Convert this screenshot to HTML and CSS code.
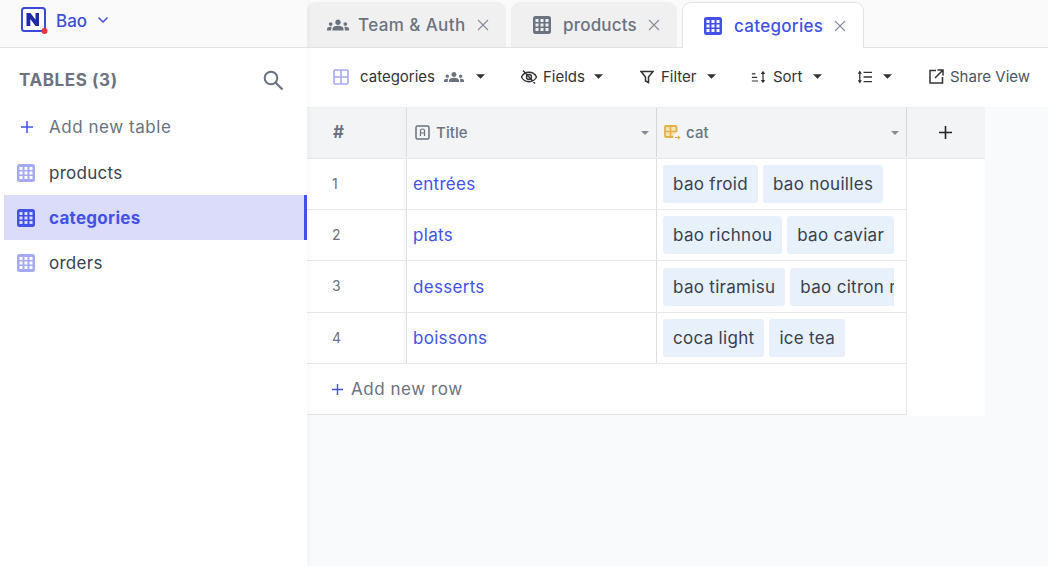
FILE: index.html
```html
<!DOCTYPE html>
<html lang="fr">
<head>
  <meta charset="UTF-8">
  <title>Bao - categories</title>
  <link rel="stylesheet" href="styles.css">
</head>
<body>
  <svg class="defs" width="0" height="0">
    <symbol id="i-table" viewBox="0 0 18 18">
      <path fill="currentColor" fill-rule="evenodd" d="M2.500 0h13A2.500 2.500 0 0 1 18 2.500v13a2.500 2.500 0 0 1-2.500 2.500h-13A2.500 2.500 0 0 1 0 15.500v-13A2.500 2.500 0 0 1 2.500 0zM2.500 3v3h3V3zm5 0v3h3V3zm5 0v3h3V3zm-10 4.500v3h3v-3zm5 0v3h3v-3zm5 0v3h3v-3zm-10 4.500v3h3v-3zm5 0v3h3v-3zm5 0v3h3v-3z"/>
    </symbol>
    <symbol id="i-team" viewBox="0 0 24 24">
      <path fill="currentColor" d="M12 12.750c1.630 0 3.070.390 4.240.900 1.080.480 1.760 1.560 1.760 2.730V18H6v-1.610c0-1.180.680-2.260 1.760-2.730 1.170-.520 2.610-.910 4.240-.910zM4 13c1.100 0 2-.900 2-2s-.900-2-2-2-2 .900-2 2 .900 2 2 2zm1.130 1.100C4.760 14.040 4.390 14 4 14c-.990 0-1.930.210-2.780.580A2.010 2.010 0 0 0 0 16.430V18h4.500v-1.610c0-.830.230-1.610.630-2.290zM20 13c1.100 0 2-.900 2-2s-.900-2-2-2-2 .900-2 2 .900 2 2 2zm4 3.430c0-.810-.480-1.530-1.220-1.850A6.950 6.950 0 0 0 20 14c-.390 0-.760.040-1.130.100.400.680.630 1.460.630 2.290V18H24zM12 6c1.660 0 3 1.340 3 3s-1.340 3-3 3-3-1.340-3-3 1.340-3 3-3z"/>
    </symbol>
    <symbol id="i-close" viewBox="0 0 12 12">
      <path fill="none" stroke="currentColor" stroke-width="1.100" d="M1 1l10 10M11 1L1 11"/>
    </symbol>
    <symbol id="i-caret" viewBox="0 0 10 5">
      <path fill="currentColor" d="M0 0h10L5 5z"/>
    </symbol>
  </svg>

  <div class="app">
    <aside class="sidebar">
      <div class="project">
        <svg class="logo" width="28" height="28" viewBox="0 0 28 28">
          <rect x="2" y="2" width="23" height="23" rx="2.500" fill="#fff" stroke="#3a48dc" stroke-width="2"/>
          <path fill="#1f2aa8" d="M6.500 20V7h4l5 6.800V7h3.500v13h-3.500l-5.200-7V20z"/>
          <circle cx="24.500" cy="25" r="3" fill="#ee3340"/>
        </svg>
        <span class="project-name">Bao</span>
        <svg class="chevron" width="12" height="8" viewBox="0 0 12 8"><path fill="none" stroke="#3f4fd8" stroke-width="1.500" d="M1.500 1.500L6 6l4.500-4.500"/></svg>
      </div>
      <div class="tables-head">
        <span>TABLES (3)</span>
        <svg width="22" height="22" viewBox="0 0 22 22"><circle cx="9" cy="9" r="6.300" fill="none" stroke="#6b7280" stroke-width="2"/><path stroke="#6b7280" stroke-width="2.200" d="M13.500 13.500l7 7"/></svg>
      </div>
      <div class="add-table">
        <svg width="14" height="14" viewBox="0 0 14 14"><path stroke="#4351e8" stroke-width="1.500" d="M7 1v12M1 7h12"/></svg>
        <span>Add new table</span>
      </div>
      <ul class="table-list">
        <li><svg width="18" height="18"><use href="#i-table"/></svg>products</li>
        <li class="active"><svg width="18" height="18"><use href="#i-table"/></svg>categories</li>
        <li><svg width="18" height="18"><use href="#i-table"/></svg>orders</li>
      </ul>
    </aside>

    <main class="main">
      <div class="tabs">
        <div class="tab tab-team"><svg class="tab-icon" width="22" height="22"><use href="#i-team"/></svg><span>Team &amp; Auth</span><svg class="tab-close" width="12" height="12"><use href="#i-close"/></svg></div>
        <div class="tab tab-products"><svg class="tab-icon" width="18" height="18"><use href="#i-table"/></svg><span>products</span><svg class="tab-close" width="12" height="12"><use href="#i-close"/></svg></div>
        <div class="tab tab-categories active"><svg class="tab-icon" width="18" height="18"><use href="#i-table"/></svg><span>categories</span><svg class="tab-close" width="12" height="12"><use href="#i-close"/></svg></div>
      </div>

      <div class="toolbar">
        <div class="tool tool-views">
          <svg width="16" height="16" viewBox="0 0 16 16"><rect x="1" y="1" width="14" height="14" rx="1" fill="none" stroke="#a6aaf5" stroke-width="1.600"/><path stroke="#a6aaf5" stroke-width="1.600" d="M8 1v14M1 8h14"/></svg>
          <span>categories</span>
          <svg class="team" width="20" height="20"><use href="#i-team"/></svg>
          <svg class="caret" width="9" height="5"><use href="#i-caret"/></svg>
        </div>
        <div class="tool tool-fields">
          <svg width="18" height="18" viewBox="0 0 18 18"><path fill="none" stroke="#333" stroke-width="1.400" d="M1.500 9C3 6 5.800 4.300 9 4.300S15 6 16.500 9c-1.500 3-4.300 4.700-7.500 4.700S3 12 1.500 9zM3 2.500l12 13"/><circle cx="9" cy="9" r="2.500" fill="none" stroke="#333" stroke-width="1.400"/></svg>
          <span>Fields</span>
          <svg class="caret" width="9" height="5"><use href="#i-caret"/></svg>
        </div>
        <div class="tool tool-filter">
          <svg width="14" height="14" viewBox="0 0 14 14"><path fill="none" stroke="#333" stroke-width="1.500" d="M1 1.500h12L8.500 7v5.500l-3-1.500V7z"/></svg>
          <span>Filter</span>
          <svg class="caret" width="9" height="5"><use href="#i-caret"/></svg>
        </div>
        <div class="tool tool-sort">
          <svg width="16" height="14" viewBox="0 0 18 14"><path stroke="#333" stroke-width="1.300" d="M1 3.500h4M1 7.500h6M1 11.500h7"/><path stroke="#333" stroke-width="1.400" d="M13.500 2v10"/><path fill="#333" d="M11 3.500L13.500 0 16 3.500zM11 10.500L13.500 14 16 10.500z"/></svg>
          <span>Sort</span>
          <svg class="caret" width="9" height="5"><use href="#i-caret"/></svg>
        </div>
        <div class="tool tool-height">
          <svg width="15" height="14" viewBox="0 0 16 14"><path stroke="#333" stroke-width="1.400" d="M3 2v10M7 2h9M7 7h9M7 12h9"/><path fill="#333" d="M.800 3.500L3 0l2.200 3.500zM.800 10.500L3 14l2.200-3.500z"/></svg>
          <svg class="caret" width="9" height="5"><use href="#i-caret"/></svg>
        </div>
        <div class="tool tool-share">
          <svg width="15" height="15" viewBox="0 0 15 15"><path fill="none" stroke="#333" stroke-width="1.500" d="M7 1.500H1v12.500h12.500V8M6 9l7.500-7.500M8.500 1H14v5.500"/></svg>
          <span>Share View</span>
        </div>
      </div>

      <div class="grid">
        <div class="grid-row grid-head">
          <div class="cell cell-num">#</div>
          <div class="cell cell-col">
            <svg width="15" height="15" viewBox="0 0 15 15"><rect x="1" y="1" width="13" height="13" rx="1.500" fill="none" stroke="#6b7280" stroke-width="1.500"/><path fill="none" stroke="#6b7280" stroke-width="1.200" d="M5.500 11V5.500q0-1.500 2-1.500t2 1.500V11M5.500 8h4"/></svg>
            <span>Title</span>
            <svg class="caret" width="8" height="4"><use href="#i-caret"/></svg>
          </div>
          <div class="cell cell-col cell-cat">
            <svg width="17" height="15" viewBox="0 0 17 15"><path fill="#f6e3b4" stroke="#e2b04a" stroke-width="1.800" d="M12.500 7V2q0-1-1-1H2q-1 0-1 1v9q0 1 1 1h7"/><path fill="none" stroke="#e2b04a" stroke-width="1.600" d="M1 6.500h11.500M6.500 1v11"/><path stroke="#e2a63a" stroke-width="1" d="M11 12.500h4"/><path fill="#e2a63a" d="M14 10.500l2.500 2-2.500 2z"/></svg>
            <span>cat</span>
            <svg class="caret" width="8" height="4"><use href="#i-caret"/></svg>
          </div>
          <div class="cell cell-add">
            <svg width="13" height="13" viewBox="0 0 13 13"><path stroke="#222" stroke-width="1.600" d="M6.500 0v13M0 6.500h13"/></svg>
          </div>
        </div>

        <div class="grid-row row-a">
          <div class="cell cell-num">1</div>
          <div class="cell cell-title">entrées</div>
          <div class="cell cell-tags"><div class="tags"><span class="tag">bao froid</span><span class="tag">bao nouilles</span></div></div>
          <div class="cell-side"></div>
        </div>
        <div class="grid-row row-a">
          <div class="cell cell-num">2</div>
          <div class="cell cell-title">plats</div>
          <div class="cell cell-tags"><div class="tags"><span class="tag">bao richnou</span><span class="tag">bao caviar</span></div></div>
          <div class="cell-side"></div>
        </div>
        <div class="grid-row row-b">
          <div class="cell cell-num">3</div>
          <div class="cell cell-title">desserts</div>
          <div class="cell cell-tags"><div class="tags"><span class="tag">bao tiramisu</span><span class="tag">bao citron meringué</span></div></div>
          <div class="cell-side"></div>
        </div>
        <div class="grid-row row-a">
          <div class="cell cell-num">4</div>
          <div class="cell cell-title">boissons</div>
          <div class="cell cell-tags"><div class="tags"><span class="tag">coca light</span><span class="tag">ice tea</span></div></div>
          <div class="cell-side"></div>
        </div>
        <div class="grid-row row-add">
          <div class="add-row">
            <svg width="11" height="11" viewBox="0 0 11 11"><path stroke="#4351e8" stroke-width="1.400" d="M5.500 0v11M0 5.500h11"/></svg>
            <span>Add new row</span>
          </div>
          <div class="cell-side"></div>
        </div>
      </div>
    </main>
  </div>
</body>
</html>
```

FILE: styles.css
```css
* {
  box-sizing: border-box;
}
html, body {
  height: 100%;
  margin: 0;
  overflow: hidden;
}
body {
  font-family: Inter, "Liberation Sans", sans-serif;
  color: #374151;
  background: #fff;
}
.defs {
  display: block;
  height: 0;
}
.app {
  display: flex;
  height: 566px;
}

/* sidebar */
.sidebar {
  width: 307px;
  flex: none;
  background: #fff;
  position: relative;
  z-index: 1;
  box-shadow: 2px 0 5px rgba(0, 0, 0, 0.03);
}
.project {
  height: 48px;
  display: flex;
  align-items: center;
  padding: 0 0 7px 20px;
  background: #fafafa;
  border-bottom: 1px solid #e2e2e2;
}
.logo {
  margin-right: 8px;
}
.project-name {
  font-size: 17px;
  font-weight: 500;
  color: #3f4fd8;
  margin-right: 10px;
  padding-top: 1px;
}
.tables-head {
  display: flex;
  align-items: center;
  justify-content: space-between;
  padding: 0 23px 0 19px;
  height: 63px;
  font-size: 17px;
  font-weight: 700;
  letter-spacing: 0.6px;
  color: #6b7280;
}
.add-table {
  display: flex;
  align-items: center;
  height: 32px;
  padding-left: 20px;
  font-size: 17px;
  letter-spacing: 0.55px;
  color: #6b7280;
}
.add-table span {
  margin-left: 15px;
}
.table-list {
  list-style: none;
  margin: 7px 0 0 4px;
  padding: 0;
}
.table-list li {
  height: 45px;
  display: flex;
  align-items: center;
  gap: 14px;
  padding-left: 13px;
  font-size: 17px;
  letter-spacing: 0.28px;
  color: #374151;
}
.table-list svg {
  color: #a6aaf5;
}
.table-list li.active {
  background: #dadcf9;
  border-right: 3px solid #4351e8;
  color: #4351e8;
  font-weight: 700;
}
.table-list li.active svg {
  color: #4351e8;
}

/* tabs */
.main {
  flex: 1;
  min-width: 0;
  background: #f9fafc;
}
.tabs {
  height: 48px;
  display: flex;
  gap: 5px;
  padding-top: 2px;
  background: #fafafa;
  border-bottom: 1px solid #e2e2e2;
}
.tab {
  height: 45px;
  display: flex;
  align-items: center;
  background: #f0f0f0;
  border-radius: 9px 9px 0 0;
  font-size: 17px;
  font-weight: 500;
  letter-spacing: 0.4px;
  color: #6b7280;
}
.tab-team {
  width: 199px;
  padding-left: 20px;
}
.tab-products {
  width: 166px;
  padding-left: 22px;
  letter-spacing: 0.2px;
}
.tab-categories {
  width: 182px;
  height: 46px;
  padding-left: 21px;
  background: #fff;
  border: 1px solid #e2e2e2;
  border-bottom: none;
  letter-spacing: 0.3px;
  color: #4351e8;
}
.tab-categories .tab-icon {
  color: #4351e8;
}
.tab-icon {
  margin-right: 12px;
  color: #6b7280;
}
.tab-team .tab-icon {
  margin-right: 9px;
}
.tab-close {
  margin-left: 11px;
  color: #858b96;
}

/* toolbar */
.toolbar {
  height: 59px;
  display: flex;
  align-items: center;
  padding-bottom: 2px;
  background: #fff;
  font-size: 15px;
  color: #374151;
}
.tool {
  display: flex;
  align-items: center;
  gap: 6px;
  color: #333;
  white-space: nowrap;
}
.caret {
  color: #333;
}
.tool-views {
  margin-left: 26px;
  width: 187px;
}
.tool-views > span {
  margin-left: 5px;
}
.tool-views .team {
  margin-left: 3px;
  color: #6b7280;
}
.tool-views .caret {
  margin-left: 6px;
}
.tool-fields {
  width: 120px;
  gap: 5px;
}
.tool-fields .caret {
  margin-left: 4px;
}
.tool-filter {
  width: 111px;
  gap: 7px;
}
.tool-filter .caret {
  margin-left: 3px;
}
.tool-sort {
  width: 106px;
  gap: 6px;
}
.tool-sort .caret {
  margin-left: 5px;
}
.tool-height {
  width: 72px;
  gap: 11px;
}
.tool-share {
  color: #4b5563;
}

/* table */
.grid {
  width: 678px;
  font-size: 17px;
  letter-spacing: 0.3px;
  background: #fff;
}
.grid-row {
  display: flex;
  border-bottom: 1px solid #e7e8ea;
}
.grid-head {
  height: 52px;
  padding-bottom: 1px;
  border-top: 1px solid #eeeeee;
  background: #f3f4f6;
  color: #6b7280;
  font-size: 15px;
  font-weight: 500;
  letter-spacing: 0.1px;
}
.row-a {
  height: 51px;
}
.row-b {
  height: 52px;
}
.cell {
  display: flex;
  align-items: center;
  border-right: 1px solid #dcdee2;
}
.cell-num {
  width: 100px;
  padding: 0 0 2px 25px;
  font-size: 14px;
  color: #6b7280;
  box-shadow: inset -6px 0 6px -6px #eee;
}
.grid-head .cell-num {
  font-size: 17px;
  font-weight: 700;
  padding-left: 26px;
}
.cell-col {
  width: 250px;
  padding-left: 8px;
  gap: 6px;
  border-right-color: #d5d7dc;
}
.cell-cat {
  gap: 5px;
  padding-left: 7px;
}
.cell-col .caret {
  margin-left: auto;
  margin-right: 7px;
  color: #858b96;
}
.cell-add {
  width: 78px;
  padding-right: 2px;
  justify-content: center;
  border-right: none;
}
.cell-title {
  width: 250px;
  padding-left: 6px;
  color: #4351e8;
}
.cell-tags {
  width: 250px;
  padding-left: 6px;
  border-right-color: #e7e8ea;
}
.tags {
  width: 231px;
  display: flex;
  gap: 5px;
  overflow: hidden;
}
.cell-side {
  width: 78px;
  background: #fff;
  margin-bottom: -1px;
}
.tag {
  flex: none;
  height: 38px;
  line-height: 38px;
  padding: 0 10px;
  border-radius: 3px;
  background: #e8f0fc;
  color: #374151;
  white-space: nowrap;
}
.row-add {
  height: 51px;
  border-bottom: none;
}
.add-row {
  width: 600px;
  display: flex;
  align-items: center;
  gap: 8px;
  padding-left: 25px;
  letter-spacing: 0.55px;
  color: #6b7280;
  border-right: 1px solid #e7e8ea;
  border-bottom: 1px solid #e7e8ea;
}
```
